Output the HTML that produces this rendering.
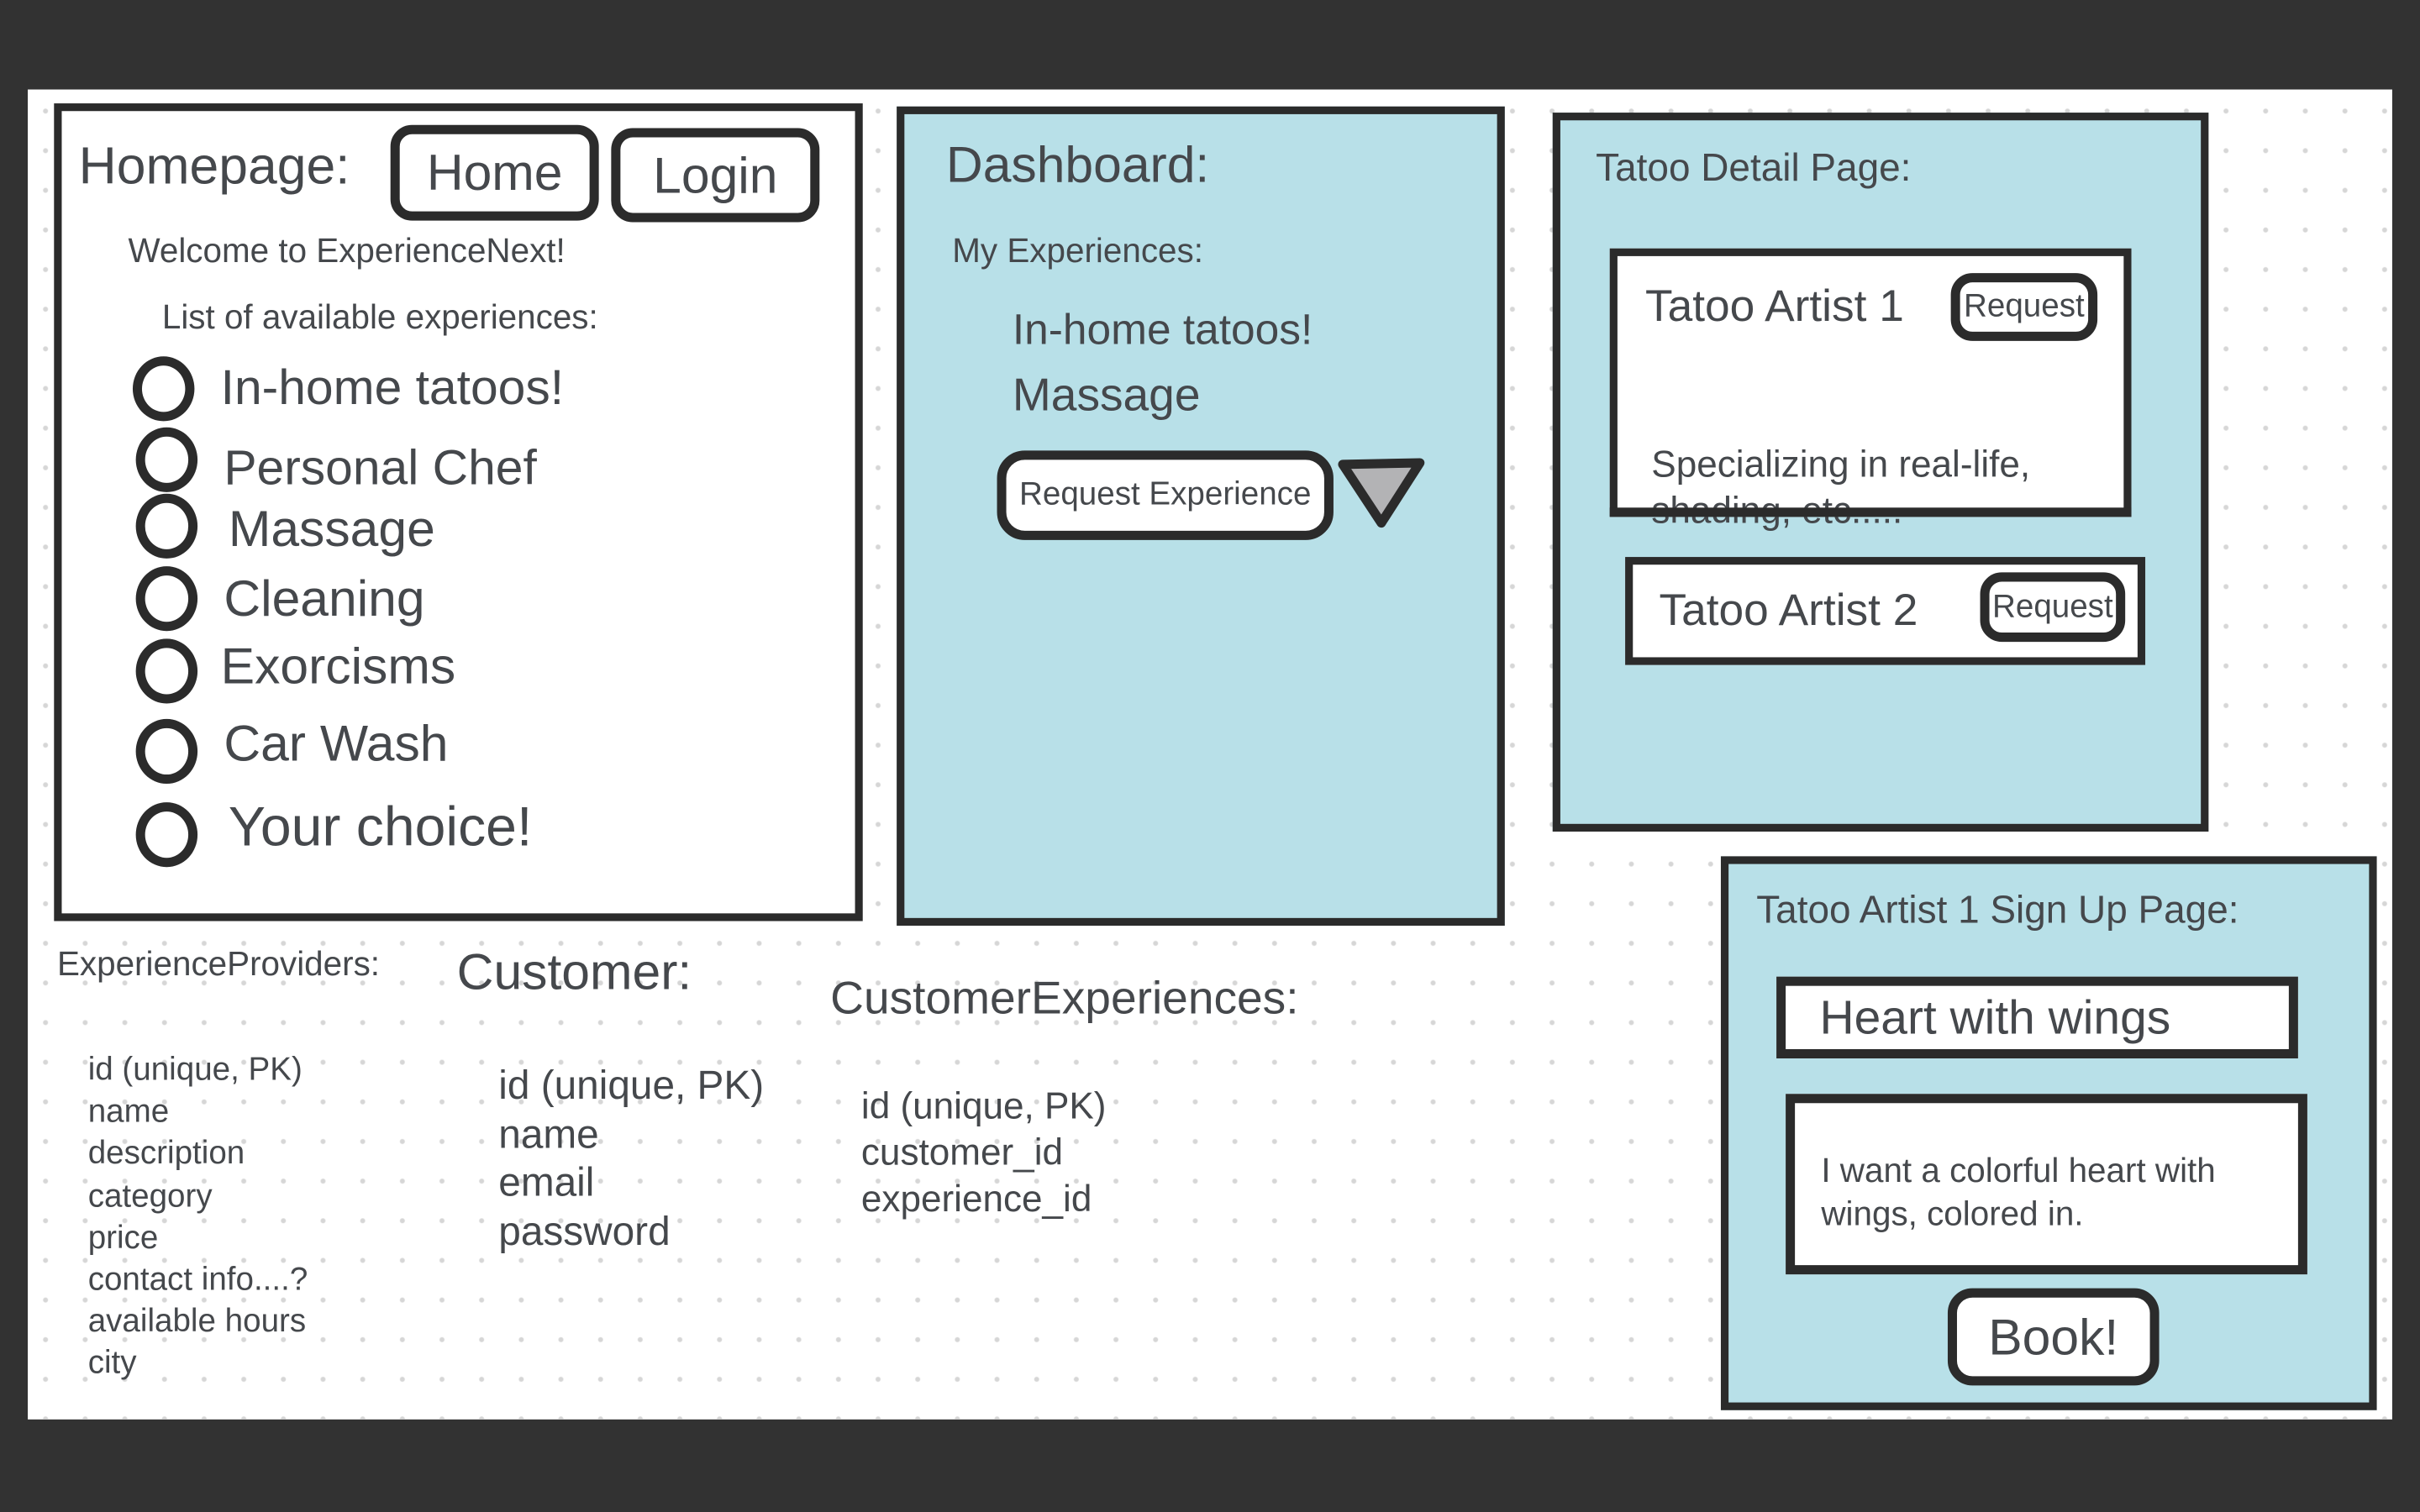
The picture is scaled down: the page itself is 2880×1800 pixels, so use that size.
<!DOCTYPE html>
<html><head><meta charset="utf-8"><style>
html,body{margin:0;padding:0;background:#323232;width:2880px;height:1800px;overflow:hidden}
#s{position:absolute;left:0;top:0;width:1568px;height:980px;transform:scale(1.83673);transform-origin:0 0;font-family:"Liberation Sans",sans-serif;color:#45484c}
.canvas{position:absolute;left:18px;top:58px;width:1532px;height:862px;background-color:#fff;background-image:radial-gradient(circle,#d6d6d6 1.3px,transparent 1.9px);background-size:25.7px 25.7px;background-position:-1.35px 1.15px}
.b{position:absolute;box-sizing:border-box;border:5px solid #2b2b2b}
.blue{background:#b8e0e8}
.w{background:#fff}
.btn{position:absolute;box-sizing:border-box;border:6px solid #2b2b2b;border-radius:14px;background:#fff;display:flex;align-items:center;justify-content:center;white-space:nowrap}
.t{position:absolute;white-space:nowrap;line-height:1}
.c{position:absolute;width:40px;height:42px;box-sizing:border-box;border:6px solid #2b2b2b;border-radius:50%;background:#fff}
</style></head><body><div id="s">
<div class="canvas"></div>

<div class="b w" style="left:35px;top:67px;width:524px;height:530px"></div>
<div class="t" style="left:51px;top:91px;font-size:34px">Homepage:</div>
<div class="btn" style="left:253px;top:81px;width:135px;height:62px;font-size:33px">Home</div>
<div class="btn" style="left:396px;top:83px;width:135px;height:61px;font-size:33px">Login</div>
<div class="t" style="left:83px;top:152px;font-size:22px">Welcome to ExperienceNext!</div>
<div class="t" style="left:105px;top:195px;font-size:22px">List of available experiences:</div>
<div class="c" style="left:86px;top:231px"></div>
<div class="c" style="left:88px;top:277px"></div>
<div class="c" style="left:88px;top:320px"></div>
<div class="c" style="left:88px;top:367px"></div>
<div class="c" style="left:88px;top:414px"></div>
<div class="c" style="left:88px;top:466px"></div>
<div class="c" style="left:88px;top:520px"></div>
<div class="t" style="left:143px;top:235px;font-size:32px">In-home tatoos!</div>
<div class="t" style="left:145px;top:287px;font-size:32px">Personal Chef</div>
<div class="t" style="left:148px;top:326px;font-size:33px">Massage</div>
<div class="t" style="left:145px;top:371px;font-size:33px">Cleaning</div>
<div class="t" style="left:143px;top:415px;font-size:33px">Exorcisms</div>
<div class="t" style="left:145px;top:465px;font-size:33px">Car Wash</div>
<div class="t" style="left:148px;top:518px;font-size:36px">Your choice!</div>

<div class="b blue" style="left:581px;top:69px;width:394px;height:531px"></div>
<div class="t" style="left:613px;top:90px;font-size:33px">Dashboard:</div>
<div class="t" style="left:617px;top:152px;font-size:22px">My Experiences:</div>
<div class="t" style="left:656px;top:200px;font-size:28px">In-home tatoos!</div>
<div class="t" style="left:656px;top:242px;font-size:30px">Massage</div>
<div class="btn" style="left:646px;top:292px;width:218px;height:58px;font-size:21px;border-radius:18px">Request Experience</div>
<svg style="position:absolute;left:866px;top:296px" width="58" height="48"><polygon points="4,5 54,4 29,43" fill="#b3b3b5" stroke="#2b2b2b" stroke-width="6" stroke-linejoin="round"/></svg>

<div class="b blue" style="left:1006px;top:73px;width:425px;height:466px"></div>
<div class="t" style="left:1034px;top:97px;font-size:25px">Tatoo Detail Page:</div>
<div class="b w" style="left:1043px;top:161px;width:338px;height:174px"></div>
<div class="t" style="left:1066px;top:185px;font-size:29px">Tatoo Artist 1</div>
<div class="btn" style="left:1264px;top:177px;width:95px;height:44px;font-size:21px">Request</div>
<div class="t" style="left:1070px;top:290px;font-size:24px">Specializing in real-life,</div>
<div class="t" style="left:1070px;top:320px;font-size:24px">shading, etc.....</div>
<div style="position:absolute;left:1043px;top:329px;width:338px;height:6px;background:#2b2b2b"></div>
<div class="b w" style="left:1053px;top:361px;width:337px;height:70px"></div>
<div class="t" style="left:1075px;top:382px;font-size:29px">Tatoo Artist 2</div>
<div class="btn" style="left:1283px;top:371px;width:94px;height:45px;font-size:21px">Request</div>

<div class="b blue" style="left:1115px;top:555px;width:425px;height:359px"></div>
<div class="t" style="left:1138px;top:578px;font-size:25px">Tatoo Artist 1 Sign Up Page:</div>
<div class="b w" style="left:1151px;top:633px;width:338px;height:53px;border-width:6px"></div>
<div class="t" style="left:1179px;top:644px;font-size:31px">Heart with wings</div>
<div class="b w" style="left:1157px;top:709px;width:338px;height:117px;border-width:6px"></div>
<div class="t" style="left:1180px;top:748px;font-size:22px">I want a colorful heart with</div>
<div class="t" style="left:1180px;top:776px;font-size:22px">wings, colored in.</div>
<div class="btn" style="left:1262px;top:835px;width:137px;height:63px;font-size:33px;border-radius:16px">Book!</div>

<div class="t" style="left:37px;top:614px;font-size:22px">ExperienceProviders:</div>
<div class="t" style="left:57px;top:680px;font-size:21px;line-height:27.2px">id (unique, PK)<br>name<br>description<br>category<br>price<br>contact info....?<br>available hours<br>city</div>
<div class="t" style="left:296px;top:613px;font-size:33px">Customer:</div>
<div class="t" style="left:323px;top:688px;font-size:26px;line-height:31.7px">id (unique, PK)<br>name<br>email<br>password</div>
<div class="t" style="left:538px;top:633px;font-size:30px">CustomerExperiences:</div>
<div class="t" style="left:558px;top:703px;font-size:24px;line-height:30px">id (unique, PK)<br>customer_id<br>experience_id</div>
</div></body></html>
